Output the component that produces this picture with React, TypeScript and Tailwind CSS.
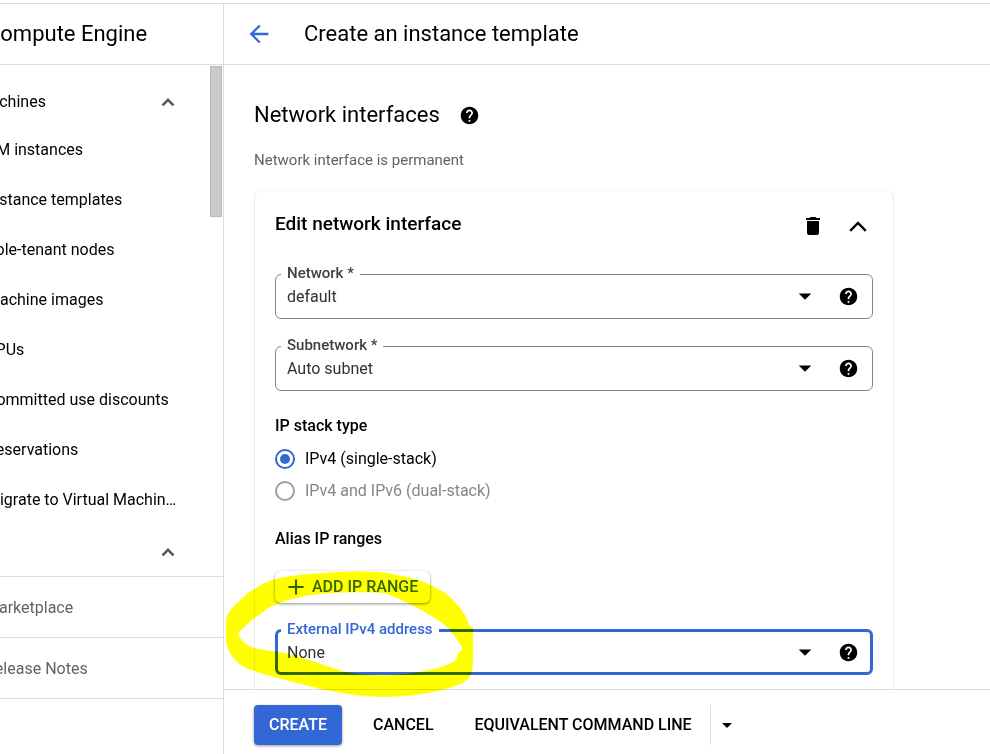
import { useId, type ReactNode } from "react";
import { MdAdd, MdArrowBack, MdArrowDropDown, MdDelete, MdHelp } from "react-icons/md";

const machineLinks = [
  "VM instances",
  "Instance templates",
  "Sole-tenant nodes",
  "Machine images",
  "TPUs",
  "Committed use discounts",
  "Reservations",
  "Migrate to Virtual Machin…",
];

function SectionChevron() {
  return (
    <svg width="14" height="10" viewBox="0 0 14 10" fill="none" aria-hidden="true">
      <path d="M1.500 8.300 7 2.800l5.500 5.500" stroke="#5a5a5a" strokeWidth="2.600" />
    </svg>
  );
}

function CardChevron() {
  return (
    <svg width="18" height="12" viewBox="0 0 18 12" fill="none" aria-hidden="true">
      <path d="M1.200 10.900 9 2.900l7.800 8" stroke="currentColor" strokeWidth="2.300" />
    </svg>
  );
}

function Sidebar() {
  return (
    <nav className="flex w-56 shrink-0 flex-col border-r border-[#dcdcdc]">
      <div className="flex h-[61px] shrink-0 items-center overflow-hidden border-b border-[#dcdcdc]">
        <h2 className="-ml-3.5 text-[22px] leading-7 whitespace-nowrap">Compute Engine</h2>
      </div>
      <div className="flex min-h-0 flex-1">
        <div className="min-w-0 flex-1 overflow-hidden pt-[15px]">
          <button type="button" className="flex h-11 w-full items-center justify-between pr-[35px]">
            <span className="-ml-[74px] whitespace-nowrap">Virtual machines</span>
            <SectionChevron />
          </button>
          <ul className="pt-px">
            {machineLinks.map((label) => (
              <li key={label}>
                <a href="#" className="-ml-3.5 flex h-[50px] items-center whitespace-nowrap">
                  {label}
                </a>
              </li>
            ))}
          </ul>
          <button
            type="button"
            aria-label="Collapse section"
            className="flex h-[52px] w-full items-center justify-end pt-0.5 pr-[35px]"
          >
            <SectionChevron />
          </button>
        </div>
        <div className="mt-px mr-px h-[151px] w-3 shrink-0 border border-[#bababa] bg-[#cacaca]" />
      </div>
      <div className="mb-[55px] shrink-0 overflow-hidden border-b border-[#dcdcdc] text-[#5f6368]">
        {["Marketplace", "Release Notes"].map((label) => (
          <a key={label} href="#" className="flex h-[61px] items-center border-t border-[#dcdcdc] pt-0.5">
            <span className="-ml-[15px] whitespace-nowrap">{label}</span>
          </a>
        ))}
      </div>
    </nav>
  );
}

function OutlinedSelect({ label, value, active = false }: { label: string; value: string; active?: boolean }) {
  const id = useId();
  return (
    <fieldset
      className={
        active
          ? "h-[53px] rounded-md border-3 border-[#3367d6] pr-[11px] pl-[3px]"
          : "h-[53px] rounded-md border border-[#80868b] pr-[13px] pl-[5px]"
      }
    >
      <legend
        className={
          active
            ? "h-4 px-1.5 text-[15px] leading-[14px] font-medium text-[#3367d6]"
            : "h-4 px-1.5 text-[15px] leading-[14px] font-medium text-[#3c4043]"
        }
      >
        <label htmlFor={id}>{label}</label>
      </legend>
      <div className="flex h-7 items-center gap-[18px]">
        <div className="relative flex-1">
          <select id={id} className="block h-7 w-full appearance-none bg-transparent pt-px pl-1.5 text-[#303134] outline-none">
            <option>{value}</option>
          </select>
          <MdArrowDropDown size={30} className="pointer-events-none absolute -top-px right-0 text-black" />
        </div>
        <button type="button" aria-label={`Help: ${label}`}>
          <MdHelp size={21} className="block text-black" />
        </button>
      </div>
    </fieldset>
  );
}

function RadioRow({ children, checked = false, disabled = false }: { children: ReactNode; checked?: boolean; disabled?: boolean }) {
  return (
    <label className={disabled ? "flex h-8 items-center gap-2.5 text-[#80868b]" : "flex h-8 items-center gap-2.5"}>
      <input
        type="radio"
        name="ip-stack"
        defaultChecked={checked}
        disabled={disabled}
        className="size-5 appearance-none rounded-full border-2 border-[#3367d6] p-[3px] checked:bg-[#3367d6] checked:bg-clip-content disabled:border-[#9e9e9e]"
      />
      {children}
    </label>
  );
}

function MarkerCircle() {
  return (
    <svg
      className="pointer-events-none absolute bottom-[55px] left-px mix-blend-multiply"
      width="250"
      height="132"
      viewBox="225 567 250 132"
      aria-hidden="true"
    >
      <path
        fill="#ffff00"
        fillRule="evenodd"
        d="M226 624C226 614 229 612 234 606L248 593 264 583C278 577 300 574 325 573 350 571 380 571 392 574 410 577 425 581 436 588 450 594 462 608 468 621L469 626 473 627V650C473 666 473 674 468 679 455 690 420 695 398 696.500 370 698 345 694 320 689 300 683 270 677 255 671 240 668 226 655 226 638ZM238 633L252 620 270 607C285 600 305 595 325 593.500 345 592 370 592 385 593 400 599 420 608 436 619 450 627 458 640 463 649L458 653 456 660C445 668 420 673 400 674.500 380 676 355 675 342 671 325 665 300 657 285 653 265 650 250 649 245 643 241 640 239 636 238 633Z"
      />
    </svg>
  );
}

export default function App() {
  return (
    <div className="flex h-screen flex-col overflow-hidden bg-white pt-[3px] font-[Roboto,sans-serif] text-base text-black">
      <div className="flex min-h-0 flex-1 border-t border-[#dcdcdc]">
        <Sidebar />
        <main className="relative flex min-w-0 flex-1 flex-col">
          <header className="flex h-[61px] shrink-0 items-center gap-[31px] border-b border-[#dcdcdc] pl-[21px]">
            <button type="button" aria-label="Back" className="text-[#3367d6]">
              <MdArrowBack size={28} />
            </button>
            <h1 className="text-[22px] leading-7">Create an instance template</h1>
          </header>

          <div className="min-h-0 flex-1 overflow-hidden pr-24 pl-[30px]">
            <div className="max-w-[640px] pt-[34px]">
              <div className="flex h-8 items-center gap-[19px]">
                <h2 className="text-[22px] leading-8">Network interfaces</h2>
                <MdHelp size={21} />
              </div>
              <p className="mt-[17px] text-[15px] leading-6 text-[#5f6368]">Network interface is permanent</p>

              <section className="mt-[18px] rounded-lg border border-[#ececec] border-t-[#f8f8f8] px-5 pt-[17px]">
                <div className="flex h-9 items-center justify-between pr-1.5">
                  <h3 className="pb-1 text-[19px] leading-7 font-medium">Edit network interface</h3>
                  <div className="flex items-center gap-6">
                    <button type="button" aria-label="Delete interface">
                      <MdDelete size={24} />
                    </button>
                    <button type="button" aria-label="Collapse interface">
                      <CardChevron />
                    </button>
                  </div>
                </div>

                <div className="mt-[22px] flex flex-col gap-[19px]">
                  <OutlinedSelect label="Network *" value="default" />
                  <OutlinedSelect label="Subnetwork *" value="Auto subnet" />
                </div>

                <h4 className="mt-[23px] font-medium">IP stack type</h4>
                <div className="mt-[5px]">
                  <RadioRow checked>IPv4 (single-stack)</RadioRow>
                  <RadioRow disabled>IPv4 and IPv6 (dual-stack)</RadioRow>
                </div>

                <h4 className="mt-5 font-medium">Alias IP ranges</h4>
                <button
                  type="button"
                  className="mt-5 flex h-8 items-center gap-[3px] rounded-md pr-3 pl-2 font-medium whitespace-nowrap text-[#3367d6] shadow-[0_1px_3px_rgba(0,0,0,0.45)]"
                >
                  <MdAdd size={26} />
                  ADD IP RANGE
                </button>
                <div className="mt-[19px] pb-10">
                  <OutlinedSelect label="External IPv4 address" value="None" active />
                </div>
              </section>
            </div>
          </div>

          <footer className="flex h-[65px] shrink-0 items-start border-t border-[#dcdcdc] pt-[15px] pl-[30px] font-medium whitespace-nowrap">
            <button type="button" className="h-10 rounded bg-[#3367d6] px-[15px] text-white shadow-[0_1px_3px_rgba(0,0,0,0.4)]">
              CREATE
            </button>
            <button type="button" className="ml-4 h-10 px-[15px]">
              CANCEL
            </button>
            <button type="button" className="ml-[11px] h-10 pr-[18px] pl-[15px]">
              EQUIVALENT COMMAND LINE
            </button>
            <button
              type="button"
              aria-label="More formats"
              className="flex h-10 items-center border-l border-[#dcdcdc] px-1"
            >
              <MdArrowDropDown size={24} />
            </button>
          </footer>
          <MarkerCircle />
        </main>
      </div>
    </div>
  );
}
